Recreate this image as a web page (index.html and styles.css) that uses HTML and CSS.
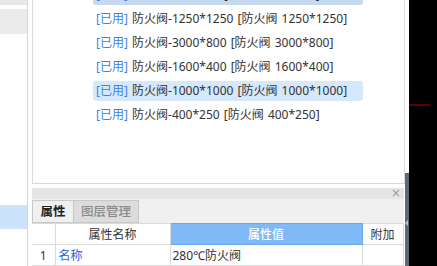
FILE: index.html
```html
<!DOCTYPE html>
<html lang="zh">
<head>
<meta charset="utf-8">
<link rel="stylesheet" href="styles.css">
</head>
<body>
<div class="app">
  <div class="left">
    <div class="l-top"></div>
    <div class="l-gray"></div>
    <div class="l-sel"></div>
  </div>
  <div class="main">
    <div class="list-panel">
      <ul class="list">
        <li class="row sel"><span class="tag">[已用]</span> 防火阀-630*320 [防火阀 630*320]</li>
        <li class="row"><span class="tag">[已用]</span> 防火阀-1250*1250 [防火阀 1250*1250]</li>
        <li class="row"><span class="tag">[已用]</span> 防火阀-3000*800 [防火阀 3000*800]</li>
        <li class="row"><span class="tag">[已用]</span> 防火阀-1600*400 [防火阀 1600*400]</li>
        <li class="row hover"><span class="tag">[已用]</span> 防火阀-1000*1000 [防火阀 1000*1000]</li>
        <li class="row"><span class="tag">[已用]</span> 防火阀-400*250 [防火阀 400*250]</li>
      </ul>
    </div>
    <div class="prop-panel">
      <div class="prop-title"><span class="close">×</span></div>
      <div class="tabs">
        <div class="tab active">属性</div>
        <div class="tab">图层管理</div>
      </div>
      <table class="grid">
        <colgroup>
          <col class="c-num"><col class="c-name"><col class="c-val"><col class="c-ext">
        </colgroup>
        <thead>
          <tr><th></th><th>属性名称</th><th class="hl">属性值</th><th>附加</th></tr>
        </thead>
        <tbody>
          <tr><td class="num">1</td><td class="link">名称</td><td>280℃防火阀</td><td></td></tr>
          <tr><td class="num"></td><td></td><td></td><td></td></tr>
        </tbody>
      </table>
    </div>
  </div>
  <div class="splitter"><div class="split-bar"><span class="arrow"></span></div></div>
  <div class="dark"><div class="red-line"></div></div>
</div>
</body>
</html>
```
FILE: styles.css
```css
* { box-sizing: border-box; }
html, body { margin: 0; padding: 0; }
body {
  width: 437px;
  height: 266px;
  overflow: hidden;
  background: #fff;
  font-family: "Noto Sans", "Noto Sans CJK SC", sans-serif;
  font-size: 12px;
  color: #333;
}
.app { display: flex; height: 266px; overflow: hidden; }

.left {
  width: 28px;
  border-right: 1px solid #d4d4d4;
  margin-right: 4px;
  display: flex;
  flex-direction: column;
  flex-shrink: 0;
}
.l-top { height: 5px; background: #e8e8e8; }
.l-gray { height: 25px; margin-top: 4px; background: #ebebeb; }
.l-sel { height: 24px; margin-top: 171px; background: #cce4fb; }

.main { width: 373px; flex-shrink: 0; display: flex; flex-direction: column; overflow: hidden; }
.list-panel {
  height: 184px;
  flex-shrink: 0;
  border: 1px solid #d9d9d9;
  border-top: none;
  overflow: hidden;
}
.list { list-style: none; margin: -15px 0 0 60px; padding: 0; }
.row {
  width: 270px;
  height: 20px;
  line-height: 20px;
  margin-bottom: 4px;
  padding-left: 3px;
  border-radius: 3px;
  white-space: nowrap;
  word-spacing: 1px;
  color: #333;
}
.row.sel { background: #c5daf0; }
.row.hover { background: #d6e8fb; }
.tag { color: #3b84e0; }

.prop-panel { margin-top: 4px; width: 372px; flex-shrink: 0; }
.prop-title {
  height: 11px;
  background: #e5e5e5;
  display: flex;
  justify-content: flex-end;
  align-items: center;
  padding-right: 3px;
}
.close { color: #9a9a9a; font-size: 12px; line-height: 11px; font-family: "DejaVu Sans", sans-serif; }
.tabs { display: flex; height: 24px; background: #f0f0f0; padding-top: 1px; }
.tab {
  height: 23px;
  line-height: 21px;
  border: 1px solid #c8c8c8;
  background: #dcdcdc;
  color: #8a8a8a;
  font-size: 12.5px;
  font-weight: 500;
  text-align: center;
}
.tab.active { background: #f0f0f0; color: #222; width: 41px; border-right: none; font-weight: bold; }
.tab + .tab { width: 66px; }

.grid { border-collapse: collapse; table-layout: fixed; width: 371px; }
.c-num { width: 23px; }
.c-name { width: 115px; }
.c-val { width: 192px; }
.c-ext { width: 41px; }
.grid th, .grid td {
  border: 1px solid #dadada;
  height: 21px;
  padding: 0 2px;
  font-weight: normal;
  white-space: nowrap;
  overflow: hidden;
}
.grid th { text-align: center; color: #333; }
.grid th.hl { background: #7fb9f7; color: #fff; font-weight: 500; border-color: #6aa8ee; }
.grid td.num { text-align: center; }
.grid td.link { color: #2563e0; padding-left: 3px; }
.grid th:first-child, .grid td:first-child { border-left: none; }

.splitter { width: 4px; flex-shrink: 0; display: flex; flex-direction: column; }
.split-bar {
  margin-top: 173px;
  flex: 1;
  background: #5f6a74;
  position: relative;
}
.arrow {
  position: absolute;
  left: 0;
  top: 47px;
  width: 0; height: 0;
  border-top: 3px solid transparent;
  border-bottom: 3px solid transparent;
  border-right: 3px solid #b8bec4;
}
.dark { flex: 1; background: #000; padding-top: 104px; }
.red-line { width: 21px; height: 2px; background: #5c0000; }
```
